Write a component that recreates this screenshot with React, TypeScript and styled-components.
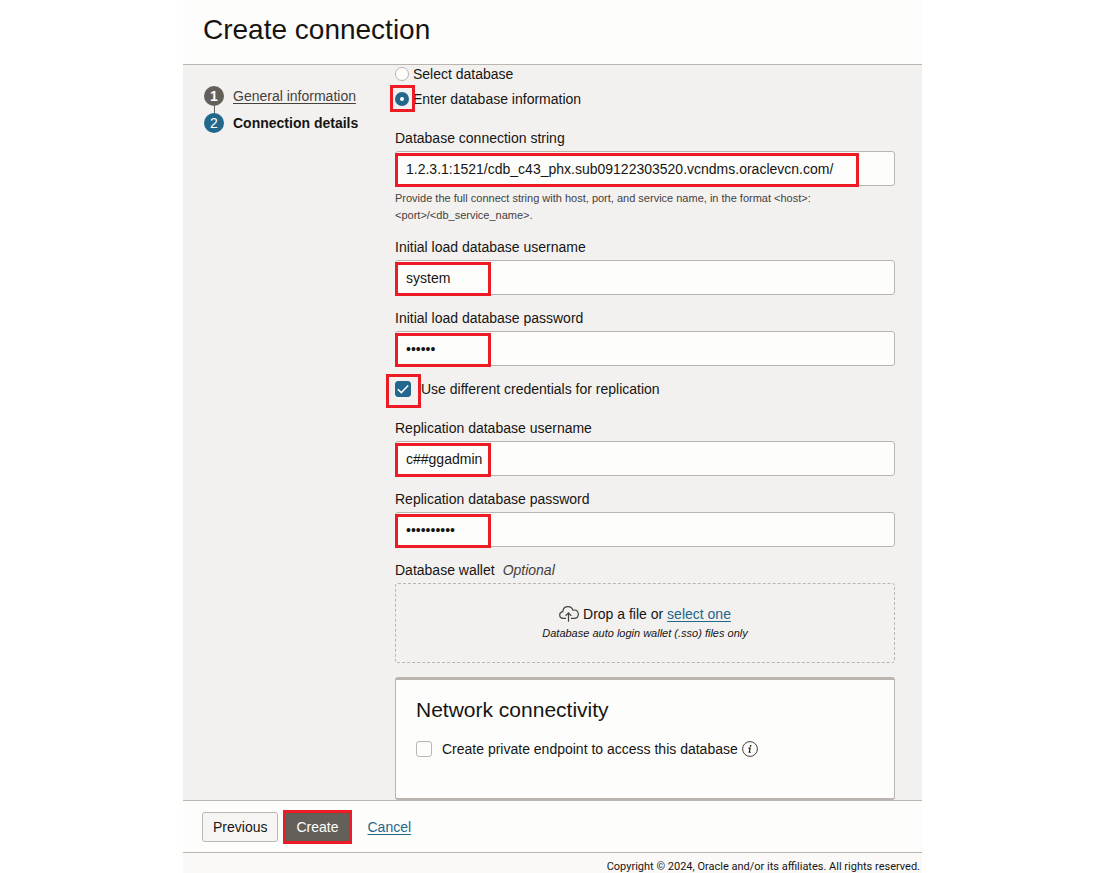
import React from "react";
import styled, { createGlobalStyle, css } from "styled-components";

const color = {
  surface: "#fdfdfb",
  body: "#f3f1f0",
  legal: "#fbf9f8",
  line: "#bbb5b0",
  text: "#161513",
  muted: "#45413d",
  accent: "#22678c",
  dark: "#655f5a",
  callout: "#ed1c24",
};

const GlobalStyle = createGlobalStyle`
  *, *::before, *::after { box-sizing: border-box; }
  body {
    margin: 0;
    background: #fff;
    color: ${color.text};
    font: 14px/20px "Liberation Sans", Arial, sans-serif;
  }
`;

const Dialog = styled.div`
  display: flex;
  flex-direction: column;
  max-width: 739px;
  min-height: 100vh;
  margin: 0 auto;
  background: ${color.surface};
`;

const Header = styled.header`
  padding: 12px 20px 16px;
  border-bottom: 1px solid ${color.line};
`;

const Title = styled.h1`
  margin: 0;
  font-size: 28px;
  line-height: 36px;
  font-weight: 400;
`;

const Body = styled.div`
  flex: 1;
  display: grid;
  grid-template-columns: 212px minmax(0, 1fr);
  padding-right: 27px;
  background: ${color.body};
`;

const Steps = styled.ol`
  display: flex;
  flex-direction: column;
  gap: 7px;
  margin: 0;
  padding: 21px 0 0 21px;
  list-style: none;
`;

const Step = styled.li<{ $current?: boolean }>`
  position: relative;
  display: flex;
  gap: 9px;
  font-weight: ${(p) => (p.$current ? 700 : 400)};

  &:not(:first-child)::before {
    content: "";
    position: absolute;
    left: 10px;
    bottom: 100%;
    width: 1px;
    height: 7px;
    background: ${color.dark};
  }
`;

const StepNumber = styled.span<{ $current?: boolean }>`
  width: 20px;
  height: 20px;
  border-radius: 50%;
  background: ${(p) => (p.$current ? color.accent : color.dark)};
  color: #fff;
  text-align: center;
  font-weight: ${(p) => (p.$current ? 400 : 700)};
`;

const Link = styled.a<{ $muted?: boolean }>`
  color: ${(p) => (p.$muted ? color.muted : color.accent)};
  text-decoration: underline;
  text-underline-offset: 2px;
`;

const Form = styled.form`
  display: flex;
  flex-direction: column;
  gap: 13px;
`;

const callout = css`
  content: "";
  position: absolute;
  border: 3px solid ${color.callout};
  pointer-events: none;
`;

const RadioGroup = styled.div`
  display: flex;
  flex-direction: column;
  gap: 7px;
  margin-bottom: 7px;
`;

const CheckGroup = styled.div`
  margin-bottom: 6px;
`;

const RadioLabel = styled.label<{ $marked?: boolean }>`
  position: relative;
  display: flex;
  align-items: center;
  gap: 4px;
  line-height: 18px;

  &::after {
    ${(p) => p.$marked && callout}
    left: -5px;
    top: -5px;
    width: 25px;
    height: 27px;
  }
`;

const Radio = styled.input.attrs({ type: "radio" })`
  appearance: none;
  width: 14px;
  height: 14px;
  margin: 0;
  border: 1px solid ${color.line};
  border-radius: 50%;
  background: ${color.surface};

  &:checked {
    border: 5px solid ${color.accent};
  }
`;

const CheckLabel = styled.label<{ $marked?: boolean }>`
  position: relative;
  display: flex;
  align-items: center;
  gap: 10px;

  &::after {
    ${(p) => p.$marked && callout}
    left: -9px;
    top: -5px;
    width: 35px;
    height: 34px;
  }
`;

const CheckFrame = styled.span`
  position: relative;
  display: flex;

  svg {
    position: absolute;
    inset: 0;
    pointer-events: none;
  }
`;

const CheckInput = styled.input.attrs({ type: "checkbox" })`
  appearance: none;
  width: 16px;
  height: 16px;
  margin: 0;
  border: 1px solid ${color.line};
  border-radius: 3px;
  background: ${color.surface};

  &:checked {
    border-color: ${color.accent};
    background: ${color.accent};
  }

  & + svg {
    visibility: hidden;
  }

  &:checked + svg {
    visibility: visible;
  }
`;

const FieldBox = styled.div`
  display: flex;
  flex-direction: column;
`;

const FieldLabel = styled.label`
  margin-bottom: 3px;

  em {
    margin-left: 8px;
    color: ${color.muted};
  }
`;

const InputFrame = styled.div<{ $mark: number }>`
  position: relative;
  display: flex;

  &::after {
    ${callout}
    left: 0;
    top: 2px;
    width: ${(p) => p.$mark}px;
    height: 34px;
  }
`;

const TextInput = styled.input`
  width: 100%;
  height: 35px;
  padding: 0 10px;
  border: 1px solid ${color.line};
  border-radius: 3px;
  background: ${color.surface};
  color: ${color.text};
  font: inherit;
`;

const Hint = styled.p`
  margin: 4px 0 0;
  max-width: 440px;
  color: ${color.muted};
  font-size: 11px;
  line-height: 17px;
`;

const DropZone = styled.div`
  display: flex;
  flex-direction: column;
  align-items: center;
  padding: 20px;
  height: 80px;
  border: 1px dashed ${color.line};
  border-radius: 3px;
`;

const DropLine = styled.div`
  display: flex;
  align-items: center;
  gap: 4px;
`;

const DropNote = styled.div`
  font-size: 11px;
  line-height: 18px;
  font-style: italic;
`;

const Card = styled.section`
  margin-top: 1px;
  padding: 18px 20px 39px;
  border: 1px solid ${color.line};
  border-width: 3px 1px 2px;
  border-radius: 3px;
  background: ${color.surface};
`;

const CardTitle = styled.h2`
  margin: 0 0 17px;
  font-size: 21px;
  line-height: 24px;
  font-weight: 400;
`;

const CardRow = styled.div`
  display: flex;
  align-items: center;
  gap: 4px;
`;

const Actions = styled.footer`
  display: flex;
  align-items: center;
  padding: 9px 19px 8px;
  border: 1px solid ${color.line};
  border-width: 1px 0;
`;

const Button = styled.button<{ $primary?: boolean }>`
  padding: 0 10px;
  border: 1px solid ${color.line};
  border-radius: 3px;
  background: #f7f5f4;
  color: ${color.text};
  font: inherit;
  line-height: 28px;

  ${(p) =>
    p.$primary &&
    css`
      margin: 0 16px 0 5px;
      border: 3px solid ${color.callout};
      border-radius: 0;
      background: ${color.dark};
      color: #fff;
    `}
`;

const Legal = styled.div`
  padding: 7px 2px 0;
  background: ${color.legal};
  color: ${color.text};
  font-family: Roboto, "Open Sans", sans-serif;
  font-size: 11px;
  line-height: 13px;
  text-align: right;
`;

function CloudUploadIcon() {
  return (
    <svg width="20" height="16" viewBox="0 0 20 16" fill="none" stroke={color.muted} strokeWidth="1.2" aria-hidden="true">
      <path d="M7 12.4H4.4C2.2 12.4.7 10.9.7 9c0-1.9 1.3-3.2 3.1-3.4C4.1 2.6 6.2.7 9 .7c2.4 0 4.2 1.2 4.9 3.4.3-.1.7-.1 1-.1 2.6 0 4.4 1.8 4.4 4.2s-1.8 4.200-4.200 4.200H12" />
      <path d="M9.500 15.800V7M6.600 9.800 9.500 6.900l2.900 2.900" />
    </svg>
  );
}

function InfoIcon() {
  return (
    <svg width="16" height="16" viewBox="0 0 16 16" fill="none" aria-hidden="true">
      <circle cx="8" cy="8" r="7.4" stroke={color.muted} strokeWidth="1" />
      <circle cx="8.6" cy="4.8" r="0.9" fill={color.text} />
      <path d="M6.500 7.100h1.700L7.200 11.300h1.600" stroke={color.text} strokeWidth="1.1" />
    </svg>
  );
}

function Checkbox({ id, checked }: { id: string; checked?: boolean }) {
  return (
    <CheckFrame>
      <CheckInput id={id} defaultChecked={checked} />
      <svg width="16" height="16" viewBox="0 0 16 16" fill="none" stroke="#fff" strokeWidth="1.5" aria-hidden="true">
        <path d="M2.800 8.200 6.300 11.600 13.200 4.500" />
      </svg>
    </CheckFrame>
  );
}

interface FieldProps {
  id: string;
  label: string;
  value: string;
  type?: string;
  mark?: number;
  hint?: string;
}

function Field({ id, label, value, type = "text", mark = 96, hint }: FieldProps) {
  return (
    <FieldBox>
      <FieldLabel htmlFor={id}>{label}</FieldLabel>
      <InputFrame $mark={mark}>
        <TextInput id={id} type={type} defaultValue={value} autoComplete="off" />
      </InputFrame>
      {hint && <Hint>{hint}</Hint>}
    </FieldBox>
  );
}

export default function App() {
  return (
    <>
      <GlobalStyle />
      <Dialog>
        <Header>
          <Title>Create connection</Title>
        </Header>
        <Body>
          <Steps>
            <Step>
              <StepNumber>1</StepNumber>
              <Link href="#general" $muted>General information</Link>
            </Step>
            <Step $current aria-current="step">
              <StepNumber $current>2</StepNumber>
              Connection details
            </Step>
          </Steps>
          <Form id="connection" onSubmit={(e) => e.preventDefault()}>
            <RadioGroup>
              <RadioLabel>
                <Radio name="source" value="select" />
                Select database
              </RadioLabel>
              <RadioLabel $marked>
                <Radio name="source" value="enter" defaultChecked />
                Enter database information
              </RadioLabel>
            </RadioGroup>
            <Field
              id="connection-string"
              label="Database connection string"
              value="1.2.3.1:1521/cdb_c43_phx.sub09122303520.vcndms.oraclevcn.com/"
              mark={464}
              hint="Provide the full connect string with host, port, and service name, in the format <host>:<port>/<db_service_name>."
            />
            <Field id="load-user" label="Initial load database username" value="system" />
            <Field id="load-password" label="Initial load database password" type="password" value="system" />
            <CheckGroup>
              <CheckLabel htmlFor="replication" $marked>
                <Checkbox id="replication" checked />
                Use different credentials for replication
              </CheckLabel>
            </CheckGroup>
            <Field id="replication-user" label="Replication database username" value="c##ggadmin" />
            <Field id="replication-password" label="Replication database password" type="password" value="c##ggadmin" />
            <FieldBox>
              <FieldLabel as="div">
                Database wallet<em>Optional</em>
              </FieldLabel>
              <DropZone>
                <DropLine>
                  <CloudUploadIcon />
                  <span>
                    Drop a file or <Link href="#wallet">select one</Link>
                  </span>
                </DropLine>
                <DropNote>Database auto login wallet (.sso) files only</DropNote>
              </DropZone>
            </FieldBox>
            <Card>
              <CardTitle>Network connectivity</CardTitle>
              <CardRow>
                <CheckLabel htmlFor="endpoint">
                  <Checkbox id="endpoint" />
                  Create private endpoint to access this database
                </CheckLabel>
                <InfoIcon />
              </CardRow>
            </Card>
          </Form>
        </Body>
        <Actions>
          <Button type="button">Previous</Button>
          <Button type="submit" form="connection" $primary>Create</Button>
          <Link href="#cancel">Cancel</Link>
        </Actions>
        <Legal>Copyright © 2024, Oracle and/or its affiliates. All rights reserved.</Legal>
      </Dialog>
    </>
  );
}
